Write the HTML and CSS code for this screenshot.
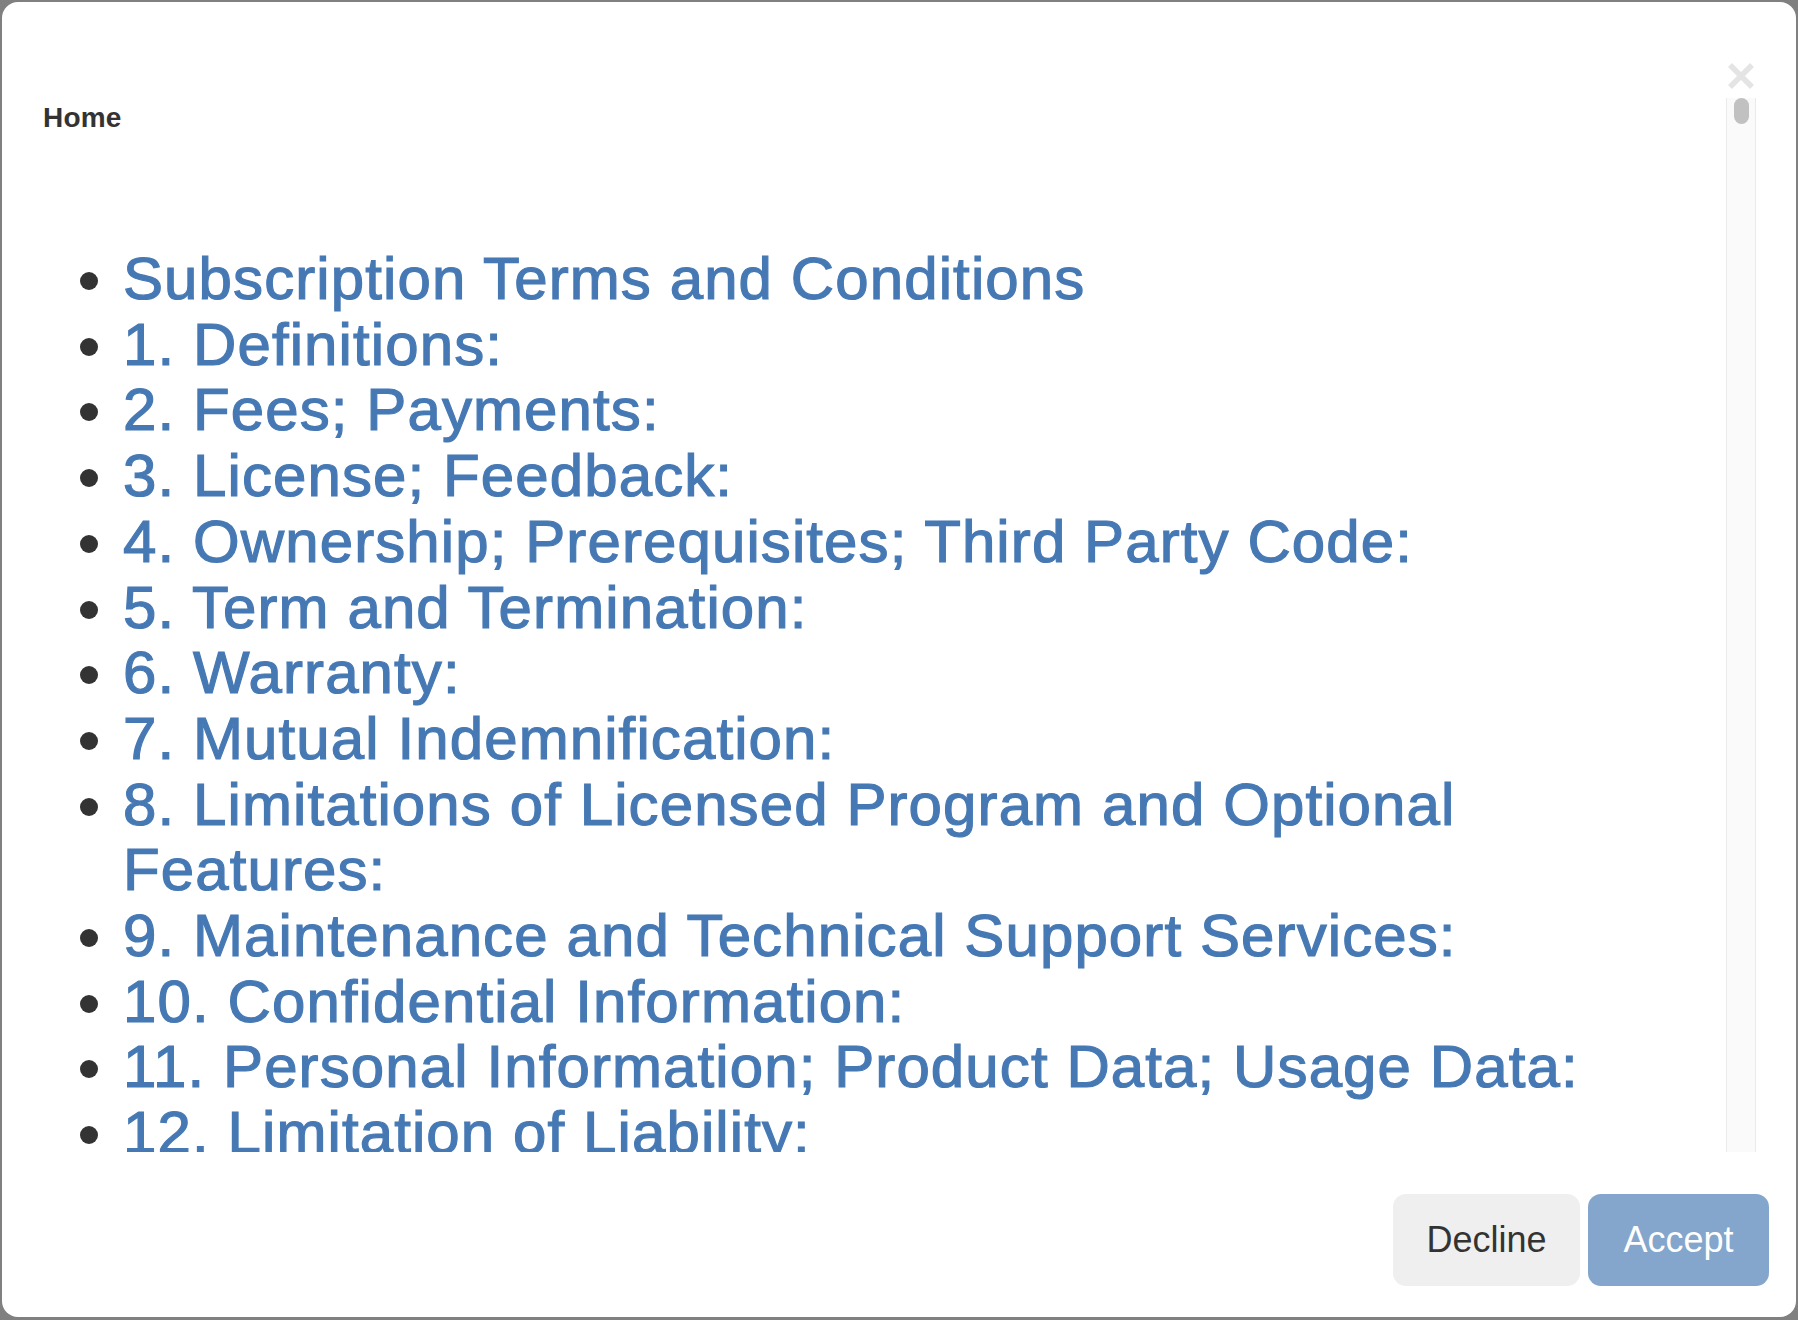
FILE: index.html
```html
<!DOCTYPE html>
<html lang="en">
<head>
<meta charset="utf-8">
<title>Subscription Terms</title>
<link rel="stylesheet" href="styles.css">
</head>
<body>
<div class="modal">
  <div class="modal-top">
    <button class="close" aria-label="Close">
      <svg width="28" height="28" viewBox="0 0 28 28" aria-hidden="true">
        <path d="M3 3 L25 25 M25 3 L3 25" stroke="#e4e4e4" stroke-width="5.5" fill="none"/>
      </svg>
    </button>
  </div>
  <div class="modal-body">
    <div class="content">
      <div class="crumb">Home</div>
      <ul class="toc">
        <li><a href="#">Subscription Terms and Conditions</a></li>
        <li><a href="#">1. Definitions:</a></li>
        <li><a href="#">2. Fees; Payments:</a></li>
        <li><a href="#">3. License; Feedback:</a></li>
        <li><a href="#">4. Ownership; Prerequisites; Third Party Code:</a></li>
        <li><a href="#">5. Term and Termination:</a></li>
        <li><a href="#">6. Warranty:</a></li>
        <li><a href="#">7. Mutual Indemnification:</a></li>
        <li><a href="#">8. Limitations of Licensed Program and Optional Features:</a></li>
        <li><a href="#">9. Maintenance and Technical Support Services:</a></li>
        <li><a href="#">10. Confidential Information:</a></li>
        <li><a href="#">11. Personal Information; Product Data; Usage Data:</a></li>
        <li><a href="#">12. Limitation of Liability:</a></li>
        <li><a href="#">13. General:</a></li>
      </ul>
    </div>
    <div class="scrollbar"><div class="thumb"></div></div>
  </div>
  <div class="modal-footer">
    <button class="btn btn-decline">Decline</button>
    <button class="btn btn-accept">Accept</button>
  </div>
</div>
</body>
</html>
```

FILE: styles.css
```css
html, body {
  margin: 0;
  height: 100%;
}
body {
  background: #808080;
  padding: 2px 2px 3px 2px;
  box-sizing: border-box;
  font-family: "Liberation Sans", Arial, Helvetica, sans-serif;
  color: #333;
}
.modal {
  background: #fff;
  border-radius: 16px;
  height: 1315px;
  display: flex;
  flex-direction: column;
  overflow: hidden;
}
.modal-top {
  height: 96px;
  flex: none;
  display: flex;
  justify-content: flex-end;
  align-items: flex-start;
  padding-right: 41px;
  box-sizing: border-box;
}
.close {
  margin-top: 60px;
  width: 28px;
  height: 28px;
  padding: 0;
  border: 0;
  background: none;
  display: block;
}
.close svg { display: block; }
.modal-body {
  height: 1054px;
  flex: none;
  display: flex;
  padding-left: 41px;
  padding-right: 40px;
}
.content {
  flex: 1;
  overflow: hidden;
  padding-right: 20px;
}
.crumb {
  font-size: 28px;
  font-weight: bold;
  line-height: 32px;
  margin-top: 4px;
  color: #333;
  letter-spacing: 0.2px;
}
.toc {
  margin: 112px 0 0 0;
  padding-left: 80px;
  font-size: 60px;
  line-height: 65.7px;
  color: #333;
}
.toc a {
  color: #4679b4;
  text-decoration: none;
  letter-spacing: 1.1px;
  -webkit-text-stroke: 1.2px #4679b4;
}
.scrollbar {
  width: 30px;
  flex: none;
  background: #fafafa;
  border-left: 1px solid #ebebeb;
  border-right: 1px solid #ebebeb;
  box-sizing: border-box;
  display: flex;
  justify-content: center;
}
.thumb {
  width: 15px;
  height: 26px;
  border-radius: 8px;
  background: #c1c1c1;
}
.modal-footer {
  flex: none;
  display: flex;
  justify-content: flex-end;
  gap: 8px;
  padding: 42px 27px 31px 0;
}
.btn {
  height: 92px;
  border: 0;
  border-radius: 13px;
  font-family: "Liberation Sans", Arial, Helvetica, sans-serif;
  font-size: 36px;
  padding: 0;
}
.btn-decline {
  width: 187px;
  background: #efefef;
  color: #333;
}
.btn-accept {
  width: 181px;
  background: #84a6cc;
  color: #fff;
}
```
